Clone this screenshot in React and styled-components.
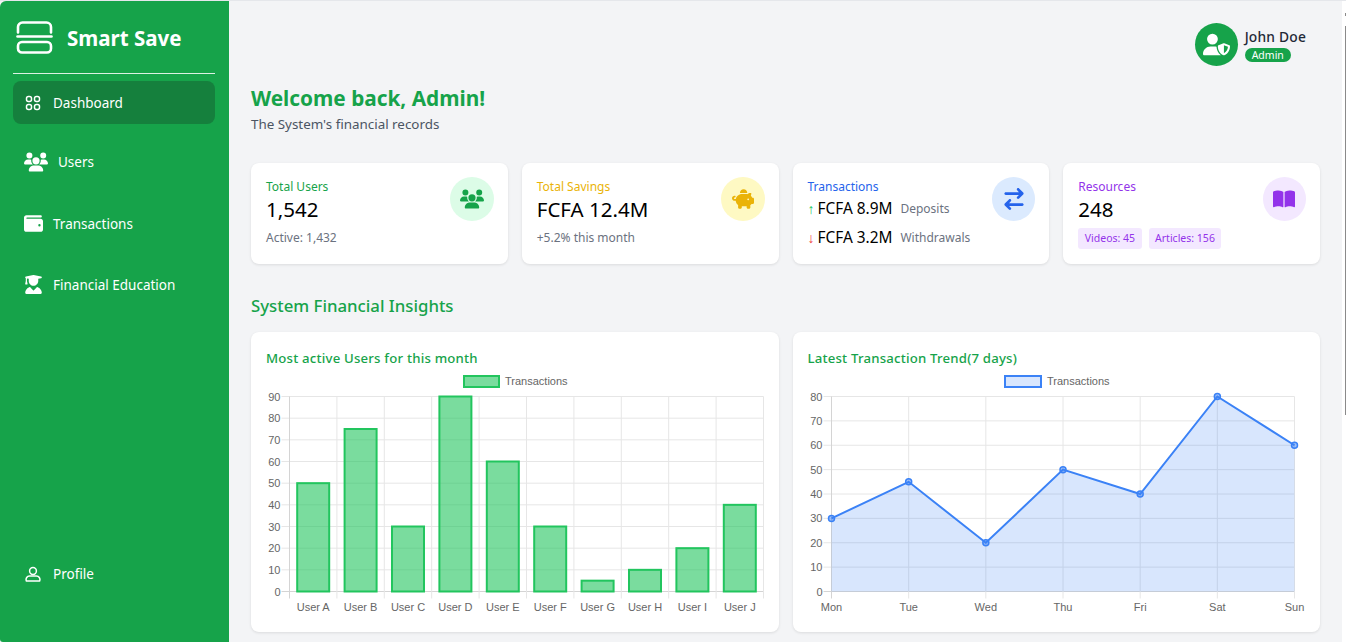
import React from 'react';
import styled, { createGlobalStyle } from 'styled-components';
import { FaUsers, FaWallet, FaUserGraduate, FaPiggyBank, FaArrowRightArrowLeft, FaBookOpen, FaUserShield } from 'react-icons/fa6';

const Global = createGlobalStyle`
  html, body { margin: 0; height: 100%; overflow: hidden; background: #f3f4f6; }
  body { font-family: "Noto Sans", "Open Sans", sans-serif; }
  * { box-sizing: border-box; }
`;

const barData = [
  ['User A', 50], ['User B', 75], ['User C', 30], ['User D', 90], ['User E', 60],
  ['User F', 30], ['User G', 5], ['User H', 10], ['User I', 20], ['User J', 40],
];
const lineData = [
  ['Mon', 30], ['Tue', 45], ['Wed', 20], ['Thu', 50], ['Fri', 40], ['Sat', 80], ['Sun', 60],
];

function DashIcon() {
  return (
    <svg width="16" height="16" viewBox="0 0 16 16" fill="none" stroke="#fff" strokeWidth="1.5">
      <rect x="1.5" y="1.5" width="5" height="5" rx="2" />
      <rect x="9.5" y="1.5" width="5" height="5" rx="2" />
      <rect x="1.5" y="9.5" width="5" height="5" rx="2" />
      <rect x="9.5" y="9.5" width="5" height="5" rx="2" />
    </svg>
  );
}

function ProfileIcon() {
  return (
    <svg width="16" height="16" viewBox="0 0 16 16" fill="none" stroke="#fff" strokeWidth="1.5" strokeLinejoin="round">
      <circle cx="8" cy="5" r="3.4" />
      <path d="M4.5 10h7a3.5 3.5 0 0 1 3.2 4.7v.3H1.3v-.3A3.5 3.5 0 0 1 4.5 10z" />
    </svg>
  );
}

function BarChart() {
  const left = 23.5, right = 497.5, top = 64.5, bottom = 259.5;
  const step = (right - left) / barData.length;
  const y = (v) => bottom - (v / 90) * (bottom - top);
  const ticks = [0, 10, 20, 30, 40, 50, 60, 70, 80, 90];
  return (
    <ChartSvg width="498" height="270" viewBox="0 0 498 270">
      <rect x="198" y="44" width="35" height="11" fill="rgba(34,197,94,0.6)" stroke="#22c55e" strokeWidth="2" />
      <AxisText x="239" y="53">Transactions</AxisText>
      {ticks.map((t) => (
        <g key={t}>
          <line x1={left - 8} x2={right} y1={y(t)} y2={y(t)} stroke={t === 0 ? '#d4d4d4' : '#e6e6e6'} />
          <AxisText x={left - 9} y={y(t) + 4} textAnchor="end">{t}</AxisText>
        </g>
      ))}
      {barData.map((d, i) => (
        <line key={d[0]} x1={left + i * step} x2={left + i * step} y1={top} y2={bottom + 7} stroke={i === 0 ? '#d4d4d4' : '#e6e6e6'} />
      ))}
      <line x1={right} x2={right} y1={top} y2={bottom + 7} stroke="#e6e6e6" />
      {barData.map((d, i) => (
        <g key={d[0]}>
          <rect
            x={left + i * step + 7.7}
            y={y(d[1])}
            width={step - 15.4}
            height={bottom - y(d[1])}
            fill="rgba(34,197,94,0.6)"
            stroke="#22c55e"
            strokeWidth="2"
          />
          <AxisText x={left + i * step + step / 2} y="279" textAnchor="middle">{d[0]}</AxisText>
        </g>
      ))}
    </ChartSvg>
  );
}

function LineChart() {
  const left = 23.5, right = 486.5, top = 64.5, bottom = 259.5;
  const step = (right - left) / (lineData.length - 1);
  const y = (v) => bottom - (v / 80) * (bottom - top);
  const ticks = [0, 10, 20, 30, 40, 50, 60, 70, 80];
  const pts = lineData.map((d, i) => `${left + i * step},${y(d[1])}`).join(' ');
  return (
    <ChartSvg width="498" height="270" viewBox="0 0 498 270">
      <rect x="197" y="44" width="36" height="11" fill="rgba(59,130,246,0.2)" stroke="#3b82f6" strokeWidth="2" />
      <AxisText x="239" y="53">Transactions</AxisText>
      {ticks.map((t) => (
        <g key={t}>
          <line x1={left - 8} x2={right} y1={y(t)} y2={y(t)} stroke={t === 0 ? '#d4d4d4' : '#e6e6e6'} />
          <AxisText x={left - 9} y={y(t) + 4} textAnchor="end">{t}</AxisText>
        </g>
      ))}
      {lineData.map((d, i) => (
        <g key={d[0]}>
          <line x1={left + i * step} x2={left + i * step} y1={top} y2={bottom + 7} stroke={i === 0 ? '#d4d4d4' : '#e6e6e6'} />
          <AxisText x={left + i * step} y="279" textAnchor="middle">{d[0]}</AxisText>
        </g>
      ))}
      <polygon points={`${left},${bottom} ${pts} ${right},${bottom}`} fill="rgba(59,130,246,0.2)" />
      <polyline points={pts} fill="none" stroke="#3b82f6" strokeWidth="2" />
      {lineData.map((d, i) => (
        <circle key={d[0]} cx={left + i * step} cy={y(d[1])} r="3" fill="rgba(59,130,246,0.5)" stroke="#3b82f6" strokeWidth="1.5" />
      ))}
    </ChartSvg>
  );
}

export default function App() {
  return (
    <Page>
      <Global />
      <Sidebar>
        <Brand>
          <svg width="37" height="33" viewBox="0 0 37 33" fill="none" stroke="#fff" strokeWidth="2.6" strokeLinecap="round" strokeLinejoin="round">
            <path d="M2 11.5V6a4.5 4.5 0 0 1 4.5-4.5h24A4.5 4.5 0 0 1 35 6v5.5" />
            <path d="M1.5 15.5h34" />
            <rect x="2" y="21" width="33" height="10.5" rx="4" />
          </svg>
          <BrandName>Smart Save</BrandName>
        </Brand>
        <Divider />
        <NavItem $active><DashIcon /><span>Dashboard</span></NavItem>
        <NavItem $top={16} $pad={11} $gap={10}><FaUsers size={24} /><span>Users</span></NavItem>
        <NavItem $top={19} $pad={11} $gap={10}><FaWallet size={19} /><span>Transactions</span></NavItem>
        <NavItem $top={18} $pad={11} $gap={10}><FaUserGraduate size={19} /><span>Financial Education</span></NavItem>
        <Spacer />
        <NavItem $bottom><ProfileIcon /><span>Profile</span></NavItem>
      </Sidebar>
      <Main>
        <TopBar>
          <UserBox>
            <Avatar><FaUserShield size={27} /></Avatar>
            <div>
              <UserName>John Doe</UserName>
              <RoleBadge>Admin</RoleBadge>
            </div>
          </UserBox>
        </TopBar>
        <Welcome>Welcome back, Admin!</Welcome>
        <SubTitle>The System's financial records</SubTitle>
        <StatGrid>
          <StatCard>
            <StatBody>
              <StatLabel $color="#16a34a">Total Users</StatLabel>
              <StatValue>1,542</StatValue>
              <StatNote>Active: 1,432</StatNote>
            </StatBody>
            <IconCircle $bg="#dcfce7" $color="#16a34a"><FaUsers size={24} /></IconCircle>
          </StatCard>
          <StatCard>
            <StatBody>
              <StatLabel $color="#eab308">Total Savings</StatLabel>
              <StatValue>FCFA 12.4M</StatValue>
              <StatNote>+5.2% this month</StatNote>
            </StatBody>
            <IconCircle $bg="#fef9c3" $color="#eab308"><FaPiggyBank size={22} /></IconCircle>
          </StatCard>
          <StatCard>
            <StatBody>
              <StatLabel $color="#2563eb">Transactions</StatLabel>
              <FlowRow $first>
                <Arrow $color="#22c55e">↑</Arrow><FlowValue>FCFA 8.9M</FlowValue><StatNote>Deposits</StatNote>
              </FlowRow>
              <FlowRow>
                <Arrow $color="#ef4444">↓</Arrow><FlowValue>FCFA 3.2M</FlowValue><StatNote>Withdrawals</StatNote>
              </FlowRow>
            </StatBody>
            <IconCircle $bg="#dbeafe" $color="#2563eb"><FaArrowRightArrowLeft size={22} /></IconCircle>
          </StatCard>
          <StatCard>
            <StatBody>
              <StatLabel $color="#9333ea">Resources</StatLabel>
              <StatValue>248</StatValue>
              <Tags>
                <Tag>Videos: 45</Tag>
                <Tag>Articles: 156</Tag>
              </Tags>
            </StatBody>
            <IconCircle $bg="#f3e8ff" $color="#9333ea"><FaBookOpen size={22} /></IconCircle>
          </StatCard>
        </StatGrid>
        <SectionTitle>System Financial Insights</SectionTitle>
        <ChartGrid>
          <ChartCard>
            <ChartTitle>Most active Users for this month</ChartTitle>
            <BarChart />
          </ChartCard>
          <ChartCard>
            <ChartTitle>Latest Transaction Trend(7 days)</ChartTitle>
            <LineChart />
          </ChartCard>
        </ChartGrid>
      </Main>
      <ScrollTrack>
        <ScrollArrow />
        <ScrollThumb />
      </ScrollTrack>
    </Page>
  );
}

const Page = styled.div`
  display: flex;
  height: 642px;
  overflow: hidden;
  background: #f3f4f6;
  border-top: 1px solid #e5e7eb;
`;

const Sidebar = styled.aside`
  width: 229px;
  flex-shrink: 0;
  background: #16a34a;
  color: #fff;
  display: flex;
  flex-direction: column;
  padding: 0 14px 0 13px;
  border-radius: 6px 0 0 3px;
`;

const Brand = styled.div`
  height: 72px;
  display: flex;
  align-items: center;
  gap: 14px;
  padding-left: 3px;
`;

const BrandName = styled.div`
  font-size: 20.5px;
  font-weight: 700;
  margin-top: 2px;
`;

const Divider = styled.div`
  height: 1px;
  background: #fff;
  opacity: 0.85;
`;

const NavItem = styled.div`
  display: flex;
  align-items: center;
  flex-shrink: 0;
  height: 43px;
  margin-top: ${(p) => (p.$active ? 7 : p.$top || 0)}px;
  margin-bottom: ${(p) => (p.$bottom ? 47 : 0)}px;
  padding-left: ${(p) => p.$pad || 12}px;
  gap: ${(p) => p.$gap || 12}px;
  border-radius: 8px;
  font-size: 13.5px;
  background: ${(p) => (p.$active ? '#15803d' : 'transparent')};
`;

const Spacer = styled.div`
  flex: 1;
`;

const Main = styled.main`
  flex: 1;
  min-width: 0;
  padding: 0 22px;
`;

const ScrollTrack = styled.div`
  width: 4px;
  flex-shrink: 0;
  background: #fff;
  padding: 12px 0 0 3px;
`;

const ScrollArrow = styled.div`
  width: 1px;
  height: 3px;
  background: #8a8a8a;
`;

const ScrollThumb = styled.div`
  width: 1px;
  height: 389px;
  margin-top: 10px;
  background: #8a8a8a;
`;

const TopBar = styled.div`
  display: flex;
  justify-content: flex-end;
  padding-top: 22px;
  height: 82px;
`;

const UserBox = styled.div`
  display: flex;
  align-items: center;
  gap: 7px;
  height: 43px;
  margin-right: 14px;
`;

const Avatar = styled.div`
  width: 43px;
  height: 43px;
  border-radius: 50%;
  background: #16a34a;
  color: #fff;
  display: flex;
  align-items: center;
  justify-content: center;
`;

const UserName = styled.div`
  font-size: 13.8px;
  font-weight: 500;
  letter-spacing: 0.2px;
  line-height: 18px;
  color: #1f2937;
`;

const RoleBadge = styled.div`
  width: fit-content;
  margin-top: 2px;
  background: #16a34a;
  color: #fff;
  font-size: 10.5px;
  line-height: 14px;
  padding: 0 7px;
  border-radius: 8px;
`;

const Welcome = styled.h1`
  margin: 0;
  font-size: 20.8px;
  line-height: 31px;
  font-weight: 700;
  color: #16a34a;
`;

const SubTitle = styled.p`
  margin: 0;
  font-size: 13.4px;
  line-height: 20px;
  color: #4b5563;
`;

const StatGrid = styled.div`
  display: grid;
  grid-template-columns: repeat(4, 1fr);
  gap: 14px;
  margin-top: 29px;
`;

const StatCard = styled.div`
  height: 101px;
  background: #fff;
  border-radius: 8px;
  box-shadow: 0 1px 3px rgba(0, 0, 0, 0.1);
  padding: 15px 14px 15px 15px;
  display: flex;
  justify-content: space-between;
  align-items: flex-start;
`;

const StatBody = styled.div`
  min-width: 0;
`;

const StatLabel = styled.div`
  color: ${(p) => p.$color};
  font-size: 12px;
  line-height: 17px;
`;

const StatValue = styled.div`
  font-size: 20.5px;
  line-height: 28px;
  color: #000;
`;

const StatNote = styled.span`
  display: block;
  font-size: 12px;
  line-height: 18px;
  margin-top: 6px;
  color: #6b7280;
`;

const FlowRow = styled.div`
  display: flex;
  align-items: center;
  height: 21px;
  margin-top: ${(p) => (p.$first ? 3 : 8)}px;
  ${StatNote} {
    margin: 0 0 0 8px;
  }
`;

const Arrow = styled.span`
  color: ${(p) => p.$color};
  font-family: "Liberation Sans", Arial, sans-serif;
  font-size: 14px;
  width: 10px;
`;

const FlowValue = styled.span`
  font-size: 15.4px;
  color: #000;
`;

const Tags = styled.div`
  display: flex;
  gap: 7px;
  margin-top: 5px;
`;

const Tag = styled.span`
  background: #f3e8ff;
  color: #9333ea;
  font-size: 10.5px;
  line-height: 21px;
  padding: 0 6.5px;
  border-radius: 3px;
`;

const IconCircle = styled.div`
  width: 43.5px;
  height: 44px;
  margin-top: -1px;
  border-radius: 50%;
  flex-shrink: 0;
  display: flex;
  align-items: center;
  justify-content: center;
  background: ${(p) => p.$bg};
  color: ${(p) => p.$color};
`;

const SectionTitle = styled.h2`
  margin: 29px 0 13px;
  font-size: 16.8px;
  line-height: 26px;
  font-weight: 500;
  color: #16a34a;
`;

const ChartGrid = styled.div`
  display: grid;
  grid-template-columns: 1fr 1fr;
  gap: 14px;
`;

const ChartCard = styled.div`
  height: 300px;
  background: #fff;
  border-radius: 8px;
  box-shadow: 0 1px 3px rgba(0, 0, 0, 0.1);
  padding: 14px 14px 0 15px;
  overflow: hidden;
`;

const ChartTitle = styled.h3`
  margin: 0;
  font-size: 13.2px;
  line-height: 24px;
  font-weight: 500;
  letter-spacing: 0.2px;
  color: #16a34a;
`;

const ChartSvg = styled.svg`
  display: block;
  margin-top: -38px;
  overflow: visible;
`;

const AxisText = styled.text`
  font-family: "Liberation Sans", Arial, sans-serif;
  font-size: 11px;
  fill: #666;
`;
